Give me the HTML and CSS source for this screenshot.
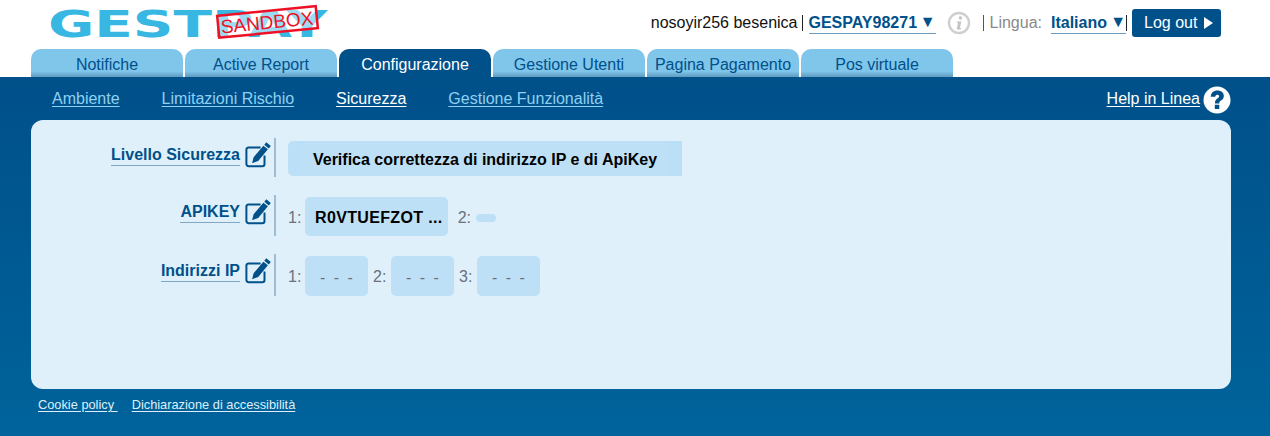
FILE: index.html
```html
<!DOCTYPE html>
<html lang="it">
<head>
<meta charset="utf-8">
<title>Gestpay</title>
<link rel="stylesheet" href="styles.css">
</head>
<body>
<svg class="defs" width="0" height="0" aria-hidden="true">
  <symbol id="edit" viewBox="0 0 26 26">
    <path d="M19.500 13.500V22a2.200 2.200 0 0 1-2.200 2.200H3.600A2.200 2.200 0 0 1 1.400 22V7.600a2.200 2.200 0 0 1 2.200-2.200h12" fill="none" stroke="#00508a" stroke-width="2"/>
    <path d="M21.300.3l4.500 3.600-2 2.500-4.500-3.600zM18.400 3.700l4.500 3.600-9.700 11.700-6.100 2.300 1.500-6.100z" fill="#00508a"/>
  </symbol>
</svg>
<header class="top">
  <div class="logo">
    <svg width="300" height="42" viewBox="0 0 300 42" aria-label="Gestpay logo">
      <text class="logo-text" transform="translate(0 33) scale(1.485 1)">GESTPAY</text>
      <g transform="rotate(-5.6 219 18)">
        <rect class="stamp" x="170" y="7" width="99" height="22"/>
        <text class="stamp-text" x="219" y="25" text-anchor="middle">SANDBOX</text>
      </g>
    </svg>
  </div>
  <div class="user">
    <span class="name">nosoyir256 besenica</span>
    <span class="bar"></span>
    <span class="select shop"><b>GESPAY98271</b><i>▼</i></span>
    <svg class="info" width="24" height="24" viewBox="0 0 24 24" aria-hidden="true">
      <circle cx="12" cy="12" r="10" fill="#fff" stroke="#cfcfcf" stroke-width="2.4"/>
      <circle cx="13.400" cy="7" r="1.700" fill="#c4c4c4"/>
      <path d="M10 10.400h4.400l-1.600 6.600h1.400l-.5 1.400H9.600l1.500-6.600H9.700z" fill="#c4c4c4"/>
    </svg>
    <span class="bar gap-bar"></span>
    <span class="lang-label">Lingua:</span>
    <span class="select lang"><b>Italiano</b><i>▼</i></span>
    <span class="bar tight"></span>
    <button class="logout">Log out<span class="arrow"></span></button>
  </div>
</header>
<nav class="tabs">
  <a class="tab">Notifiche</a>
  <a class="tab">Active Report</a>
  <a class="tab active">Configurazione</a>
  <a class="tab">Gestione Utenti</a>
  <a class="tab">Pagina Pagamento</a>
  <a class="tab">Pos virtuale</a>
</nav>
<div class="stage">
  <nav class="subnav">
    <a class="sub">Ambiente</a>
    <a class="sub">Limitazioni Rischio</a>
    <a class="sub current">Sicurezza</a>
    <a class="sub">Gestione Funzionalità</a>
    <a class="help">Help in Linea</a>
    <svg class="help-icon" width="28" height="28" viewBox="0 0 28 28" aria-hidden="true">
      <circle cx="14" cy="14" r="13.500" fill="#fff"/>
      <path d="M7.800 10.800C8 6.800 10.600 4.600 14.300 4.600c3.900 0 6.500 2.100 6.500 5.300 0 2.200-1.100 3.500-2.800 4.700-1.300.9-1.700 1.400-1.700 2.800h-4.300c-.1-2.600.7-3.700 2.300-4.900 1.200-.9 1.800-1.400 1.800-2.300 0-.9-.7-1.500-1.800-1.500-1.200 0-1.900.7-2 2.100zM11.800 18.800h4.500v4.300h-4.500z" fill="#00508a"/>
    </svg>
  </nav>
  <main class="panel">
    <section class="row row-level">
      <div class="label"><a>Livello Sicurezza</a><svg class="edit" width="26" height="26"><use href="#edit"/></svg></div>
      <div class="values"><span class="box wide"><span class="wide-inner">Verifica correttezza di indirizzo IP e di ApiKey</span></span></div>
    </section>
    <section class="row row-key">
      <div class="label"><a>APIKEY</a><svg class="edit" width="26" height="26"><use href="#edit"/></svg></div>
      <div class="values">
        <span class="idx">1:</span><span class="box key">R0VTUEFZOT ...</span>
        <span class="idx second">2:</span><span class="box empty"></span>
      </div>
    </section>
    <section class="row row-ip">
      <div class="label"><a>Indirizzi IP</a><svg class="edit" width="26" height="26"><use href="#edit"/></svg></div>
      <div class="values">
        <span class="idx">1:</span><span class="box ip">- - -</span>
        <span class="idx">2:</span><span class="box ip">- - -</span>
        <span class="idx">3:</span><span class="box ip">- - -</span>
      </div>
    </section>
  </main>
  <footer class="foot">
    <a>Cookie policy&nbsp;</a>
    <a>Dichiarazione di accessibilità</a>
  </footer>
</div>
</body>
</html>
```
FILE: styles.css
```css
* { box-sizing: border-box; }
html, body { margin: 0; padding: 0; height: 436px; overflow: hidden; }
body { font-family: "Liberation Sans", Arial, sans-serif; background: #fff; color: #000; }
.defs { position: absolute; }

.top { height: 49px; display: flex; align-items: flex-start; justify-content: space-between; padding: 0 49px 0 48px; }
.logo { height: 49px; padding-top: 4px; }
.logo svg { display: block; }
.logo-text { font-family: "DejaVu Sans", sans-serif; font-weight: 700; font-size: 38px; fill: #39b7e3; }
.stamp { fill: rgba(255,255,255,.5); stroke: #ee1126; stroke-width: 2.500; }
.stamp-text { font-family: "Liberation Sans", sans-serif; font-size: 19px; fill: #ee1126; }

.user { display: flex; align-items: center; height: 27px; margin-top: 9px; font-size: 16px; }
.name { color: #111; }
.bar { width: 1px; height: 16px; background: #222; margin: 0 6px 0 4px; }
.gap-bar { margin: 0 6px 0 12px; background: #555; }
.tight { margin: 0 5px 0 0; }
.select { display: flex; justify-content: space-between; border-bottom: 1px solid #6b9cc2; color: #00508a; line-height: 18px; height: 20px; margin-top: 2px; }
.select b { font-size: 16px; }
.select i { font-style: normal; font-size: 16px; line-height: 15px; }
.shop { width: 127px; }
.info { margin-left: 11px; }
.lang-label { color: #8a8a8a; margin-right: 9px; }
.lang { width: 75px; }
.logout { display: flex; align-items: center; height: 28px; width: 89px; padding: 0 0 0 12px; border: 0; border-radius: 3px; background: #00508a; color: #fff; font: 16px "Liberation Sans", Arial, sans-serif; }
.arrow { width: 0; height: 0; margin-left: 7px; border-left: 9px solid #fff; border-top: 6px solid transparent; border-bottom: 6px solid transparent; }

.tabs { height: 28px; display: flex; gap: 2px; padding-left: 31px; }
.tab { width: 152px; height: 28px; border-radius: 10px 10px 0 0; background: linear-gradient(#80c5ea 0, #80c5ea 80%, #5f9bc0 100%); color: #00508a; font-size: 16px; line-height: 31px; text-align: center; white-space: nowrap; }
.tab.active { background: #00508a; color: #fff; }

.stage { height: 359px; background: linear-gradient(#00508a, #00639b); padding: 0 39px 0 31px; }
.subnav { height: 43px; display: flex; align-items: center; gap: 42px; padding: 0 0 0 21px; font-size: 16px; }
.sub { color: #8fd0f2; text-decoration: underline; text-underline-offset: 2px; white-space: nowrap; }
.sub.current { color: #fff; }
.help { margin-left: auto; color: #fff; text-decoration: underline; text-underline-offset: 2px; }
.help-icon { margin: 2px 0 0 -39px; flex: none; }

.panel { width: 1200px; height: 269px; background: #dff0fa; border-radius: 12px; padding-top: 18px; }
.row { display: flex; }
.row-level { height: 39px; margin-bottom: 18px; }
.row-key { height: 41px; margin-bottom: 18px; }
.row-ip { height: 42px; }
.label { width: 245px; height: 100%; display: flex; justify-content: flex-end; gap: 5px; padding-right: 3px; border-right: 2px solid #9dbdd3; }
.label a { color: #00508a; font-weight: 700; font-size: 16px; line-height: 18px; height: 20px; margin-top: 8px; border-bottom: 1px solid #7fa8c6; white-space: nowrap; }
.edit { flex: none; margin-top: 4px; }
.values { display: flex; align-items: center; padding-left: 12px; flex: 1; }
.row-level .values { align-items: flex-start; padding-top: 3px; }
.row-key .values, .row-ip .values { padding-top: 2px; }
.idx { color: #68717c; font-size: 16px; width: 17px; white-space: nowrap; padding-top: 2px; }
.box { background: #bee0f6; border-radius: 5px; display: flex; align-items: center; justify-content: center; font-weight: 700; font-size: 16px; }
.wide { width: 394px; height: 35px; border-radius: 5px 0 0 5px; background: #bbdff6; }
.wide-inner { display: block; width: 366px; height: 31px; line-height: 33px; text-align: center; background: #bee0f6; white-space: nowrap; }
.key { width: 143px; height: 39px; padding: 2px 0 0 10px; justify-content: flex-start; letter-spacing: .35px; white-space: nowrap; }
.second { width: 23px; text-align: right; padding-right: 5px; box-sizing: content-box; }
.empty { width: 20px; height: 8px; border-radius: 4px; margin-top: 2px; }
.ip { width: 63px; height: 40px; padding-top: 3px; font-weight: 400; color: #68717c; word-spacing: 4px; margin-right: 5px; }
.row-ip .idx { width: 18px; }
.row-ip .idx:first-child { width: 17px; }

.foot { display: flex; gap: 14px; padding: 8px 0 0 7px; font-size: 12.800px; }
.foot a { color: #dfeff9; text-decoration: underline; text-underline-offset: 2px; }
```
